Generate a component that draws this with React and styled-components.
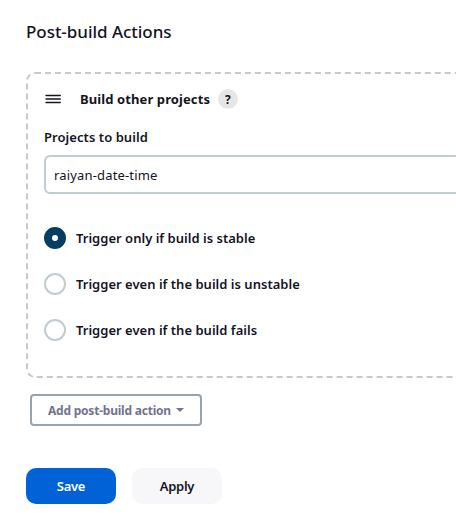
import React from "react";
import styled, { createGlobalStyle } from "styled-components";

const Global = createGlobalStyle`
  * { box-sizing: border-box; }
  body { margin: 0; overflow: hidden; background: #fff; color: #14141f; font-family: "Noto Sans", sans-serif; font-size: 13px; }
`;

const Page = styled.main`
  height: 529px;
  padding: 20px 0 0 26px;
  overflow: hidden;
`;

const Title = styled.h2`
  margin: 0;
  font-size: 17px;
  font-weight: 500;
  line-height: 24px;
  letter-spacing: -0.04px;
`;

const Panel = styled.section`
  width: 600px;
  height: 306px;
  margin-top: 28px;
  padding: 15px 16px;
  border: 2px dashed #c1cbd0;
  border-radius: 9px;
`;

const PanelHeader = styled.header`
  display: flex;
  align-items: center;
  height: 20px;
  font-weight: 700;
  letter-spacing: 0.1px;
`;

const Grip = styled.svg`
  width: 18px;
  height: 18px;
  margin-right: 18px;
`;

const Help = styled.span`
  display: grid;
  place-items: center;
  width: 20px;
  height: 20px;
  margin-left: 8px;
  border-radius: 50%;
  background: #e6e6e6;
  font-size: 12px;
`;

const Label = styled.label`
  display: block;
  margin-top: 18px;
  line-height: 20px;
  font-weight: 600;
  letter-spacing: 0.06px;
`;

const Input = styled.input`
  display: block;
  width: 560px;
  height: 39px;
  margin-top: 8px;
  padding: 0 8px;
  border: 2px solid #c1cbd0;
  border-radius: 6px;
  font: inherit;
  letter-spacing: 0.16px;
  color: inherit;
`;

const Options = styled.div`
  display: grid;
  gap: 24px;
  margin-top: 33px;
`;

const Option = styled.label`
  display: flex;
  align-items: center;
  gap: 10px;
  height: 22px;
  font-weight: 600;
  letter-spacing: 0.015px;
`;

const Radio = styled.input`
  appearance: none;
  width: 22px;
  height: 22px;
  margin: 0;
  border: 2px solid #c1cbd0;
  border-radius: 50%;
  &:checked { border: 8px solid #063e63; }
`;

const AddButton = styled.button`
  display: flex;
  align-items: center;
  gap: 5px;
  width: 172px;
  height: 32px;
  margin: 16px 0 0 4px;
  padding: 0 14px 0 16px;
  border: 2px solid #98a4ad;
  border-radius: 4px;
  background: #fff;
  color: #73738c;
  font: 700 12px "Noto Sans", sans-serif;
  letter-spacing: -0.22px;
  white-space: nowrap;
`;

const Caret = styled.svg`
  flex: none;
  width: 8px;
  height: 4px;
`;

const Actions = styled.footer`
  display: flex;
  gap: 16px;
  margin-top: 42px;
`;

const Button = styled.button`
  width: 90px;
  height: 36px;
  border: 0;
  border-radius: 10px;
  background: ${(p) => (p.$primary ? "#0062d6" : "#f7f7f9")};
  color: ${(p) => (p.$primary ? "#fff" : "#14141f")};
  font: 600 13px "Noto Sans", sans-serif;
  letter-spacing: -0.3px;
`;

const OPTIONS = ["Trigger only if build is stable", "Trigger even if the build is unstable", "Trigger even if the build fails"];

export default function App() {
  return (
    <Page>
      <Global />
      <Title>Post-build Actions</Title>
      <Panel>
        <PanelHeader>
          <Grip viewBox="0 0 18 18" fill="none" stroke="#14141f" strokeLinecap="round" strokeWidth="1.3">
            <path d="M2 5.5h14.3M2 9h14.3M2 12.5h14.3" />
          </Grip>
          Build other projects
          <Help>?</Help>
        </PanelHeader>
        <Label htmlFor="projects">Projects to build</Label>
        <Input id="projects" defaultValue="raiyan-date-time" />
        <Options>
          {OPTIONS.map((text, i) => (
            <Option key={text}><Radio type="radio" name="threshold" defaultChecked={i === 0} />{text}</Option>
          ))}
        </Options>
      </Panel>
      <AddButton>
        Add post-build action
        <Caret viewBox="0 0 8 4"><path d="M0 0h8L4 4z" fill="#73738c" /></Caret>
      </AddButton>
      <Actions>
        <Button $primary>Save</Button>
        <Button>Apply</Button>
      </Actions>
    </Page>
  );
}
